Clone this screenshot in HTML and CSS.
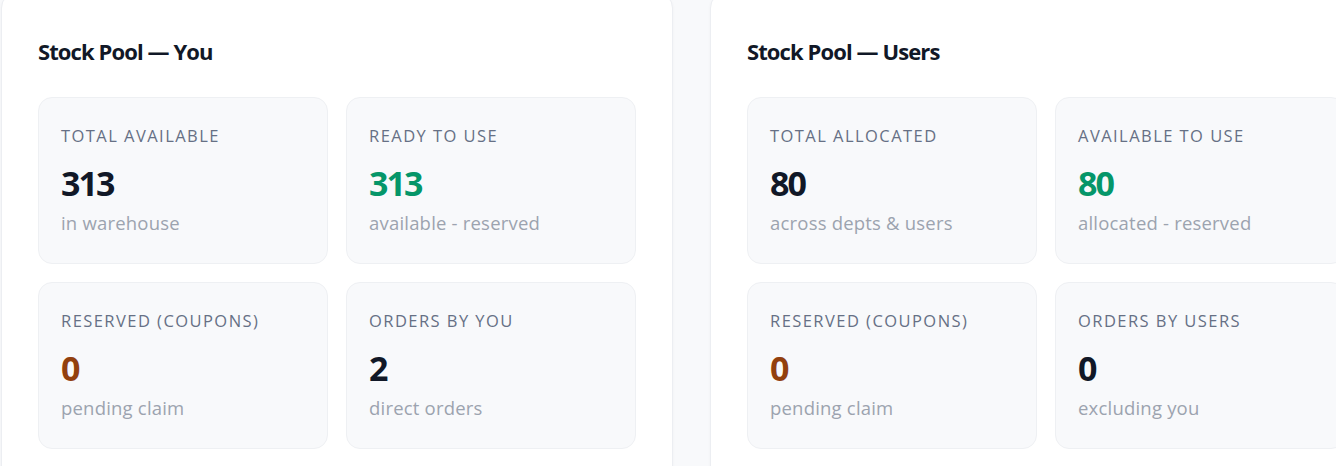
FILE: index.html
```html
<!DOCTYPE html>
<html lang="en">
<head>
<meta charset="utf-8">
<title>Stock Pool</title>
<link rel="stylesheet" href="styles.css">
</head>
<body>
<main class="page">
  <section class="panel">
    <h2 class="panel-title">Stock Pool — You</h2>
    <div class="stats">
      <div class="stat">
        <div class="stat-label">Total available</div>
        <div class="stat-value">313</div>
        <div class="stat-sub">in warehouse</div>
      </div>
      <div class="stat">
        <div class="stat-label">Ready to use</div>
        <div class="stat-value green">313</div>
        <div class="stat-sub">available - reserved</div>
      </div>
      <div class="stat">
        <div class="stat-label">Reserved (coupons)</div>
        <div class="stat-value amber">0</div>
        <div class="stat-sub">pending claim</div>
      </div>
      <div class="stat">
        <div class="stat-label">Orders by you</div>
        <div class="stat-value">2</div>
        <div class="stat-sub">direct orders</div>
      </div>
    </div>
  </section>
  <section class="panel">
    <h2 class="panel-title">Stock Pool — Users</h2>
    <div class="stats">
      <div class="stat">
        <div class="stat-label">Total allocated</div>
        <div class="stat-value">80</div>
        <div class="stat-sub">across depts &amp; users</div>
      </div>
      <div class="stat">
        <div class="stat-label">Available to use</div>
        <div class="stat-value green">80</div>
        <div class="stat-sub">allocated - reserved</div>
      </div>
      <div class="stat">
        <div class="stat-label">Reserved (coupons)</div>
        <div class="stat-value amber">0</div>
        <div class="stat-sub">pending claim</div>
      </div>
      <div class="stat">
        <div class="stat-label">Orders by users</div>
        <div class="stat-value">0</div>
        <div class="stat-sub">excluding you</div>
      </div>
    </div>
  </section>
</main>
</body>
</html>
```

FILE: styles.css
```css
* { box-sizing: border-box; }

html, body {
  margin: 0;
  padding: 0;
  background: #f8f9fb;
  overflow: hidden;
}

body {
  font-family: "Open Sans", "Noto Sans", sans-serif;
  color: #111827;
}

.page {
  display: flex;
  gap: 37px;
  margin-top: -8px;
  padding-left: 1px;
}

.panel {
  flex: 0 0 672px;
  width: 672px;
  background: #ffffff;
  border: 1px solid #eceef2;
  border-radius: 16px;
  box-shadow: 0 1px 3px rgba(17, 24, 39, 0.04);
  padding: 44px 36px 36px;
}

.panel-title {
  margin: 0 0 32px;
  font-size: 22px;
  line-height: 28px;
  font-weight: 700;
  letter-spacing: -0.9px;
  color: #111827;
}

.stats {
  display: grid;
  grid-template-columns: 290px 290px;
  gap: 18px;
}

.stat {
  height: 167px;
  background: #f8f9fb;
  border: 1px solid #eef0f3;
  border-radius: 14px;
  padding: 27px 22px 0;
  display: flex;
  flex-direction: column;
}

.stat-label {
  font-size: 16.5px;
  line-height: 22px;
  font-weight: 500;
  text-transform: uppercase;
  letter-spacing: 1.45px;
  color: #667085;
}

.stat-value {
  margin-top: 18px;
  font-size: 34px;
  line-height: 36px;
  font-weight: 700;
  letter-spacing: -2px;
  color: #111827;
}

.stat-value.green { color: #059669; }
.stat-value.amber { color: #92400e; }

.stat-sub {
  margin-top: 10px;
  font-size: 18.5px;
  line-height: 24px;
  letter-spacing: 0.2px;
  color: #9ca3af;
}
```
